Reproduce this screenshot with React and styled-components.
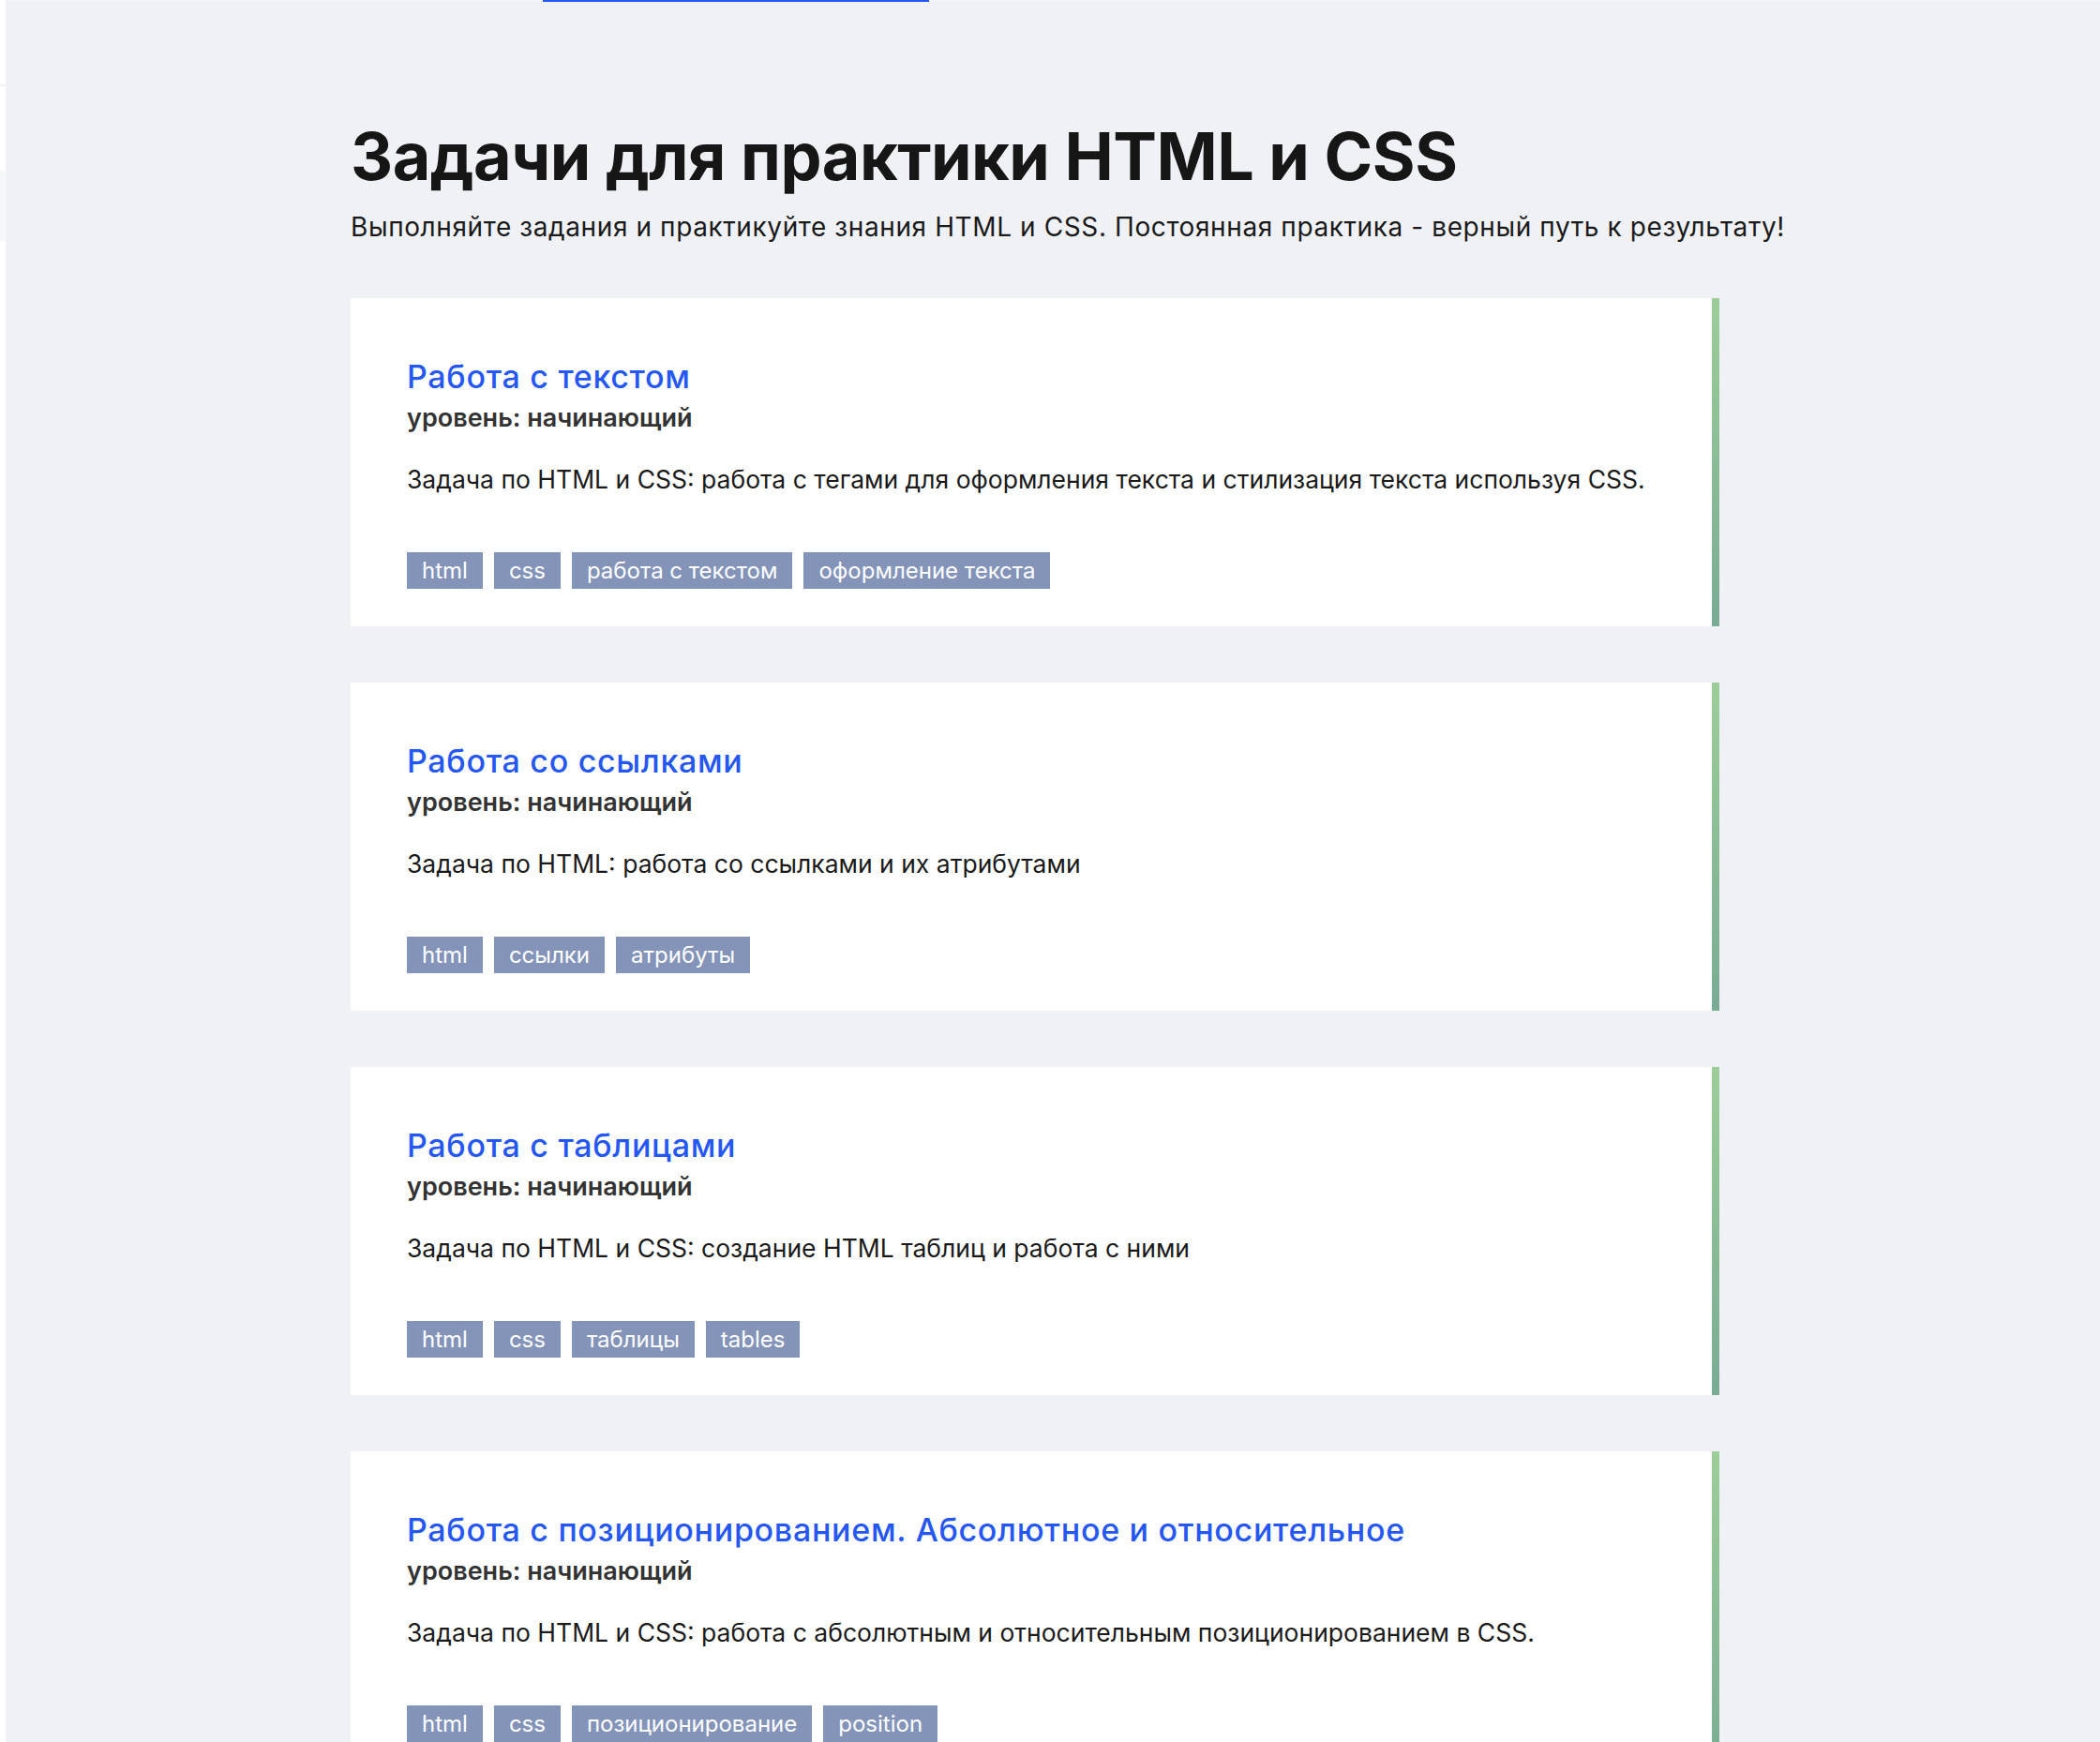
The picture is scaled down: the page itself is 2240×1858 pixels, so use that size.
import React from "react";
import styled, { createGlobalStyle } from "styled-components";

const GlobalStyle = createGlobalStyle`
  html, body {
    margin: 0;
    padding: 0;
    background: #eff1f5;
  }
  body {
    font-family: Inter, "Noto Sans", sans-serif;
    color: #161616;
  }
`;

const tasks = [
  {
    title: "Работа с текстом",
    level: "начинающий",
    text: "Задача по HTML и CSS: работа с тегами для оформления текста и стилизация текста используя CSS.",
    tags: ["html", "css", "работа с текстом", "оформление текста"],
  },
  {
    title: "Работа со ссылками",
    level: "начинающий",
    text: "Задача по HTML: работа со ссылками и их атрибутами",
    tags: ["html", "ссылки", "атрибуты"],
  },
  {
    title: "Работа с таблицами",
    level: "начинающий",
    text: "Задача по HTML и CSS: создание HTML таблиц и работа с ними",
    tags: ["html", "css", "таблицы", "tables"],
  },
  {
    title: "Работа с позиционированием. Абсолютное и относительное",
    level: "начинающий",
    text: "Задача по HTML и CSS: работа с абсолютным и относительным позиционированием в CSS.",
    tags: ["html", "css", "позиционирование", "position"],
  },
];

function App() {
  return (
    <>
      <GlobalStyle />
      <Page>
        <SideStrip>
          <StripLine />
          <StripBlock />
        </SideStrip>
        <Main>
          <TopBar>
            <Progress />
          </TopBar>
          <Content>
            <Heading>Задачи для практики HTML и CSS</Heading>
            <Lead>
              Выполняйте задания и практикуйте знания HTML и CSS. Постоянная практика - верный путь к результату!
            </Lead>
            <TaskList>
              {tasks.map((task) => (
                <TaskCard key={task.title}>
                  <TaskTitle href="#">{task.title}</TaskTitle>
                  <Level>уровень: {task.level}</Level>
                  <Description>{task.text}</Description>
                  <Tags>
                    {task.tags.map((tag) => (
                      <Tag key={tag}>{tag}</Tag>
                    ))}
                  </Tags>
                </TaskCard>
              ))}
            </TaskList>
          </Content>
        </Main>
      </Page>
    </>
  );
}

const Page = styled.div`
  display: flex;
  min-height: 100vh;
`;

const SideStrip = styled.div`
  width: 6px;
  flex-shrink: 0;
  background: #ffffff;
  padding-top: 90px;
`;

const StripLine = styled.div`
  height: 2px;
  background: #eff1f5;
`;

const StripBlock = styled.div`
  margin-top: 90px;
  height: 75px;
  background: #f6f7f9;
`;

const Main = styled.div`
  flex: 1;
  display: flex;
  flex-direction: column;
`;

const TopBar = styled.div`
  height: 1px;
  background: #f7f8fa;
`;

const Progress = styled.div`
  margin-left: 573px;
  width: 412px;
  height: 2px;
  background: #2457f5;
`;

const Content = styled.div`
  padding: 123px 0 0 368px;
`;

const Heading = styled.h1`
  margin: 0;
  font-size: 70px;
  line-height: 86px;
  font-weight: 700;
  color: #161616;
  letter-spacing: -0.5px;
`;

const Lead = styled.p`
  margin: 13px 0 0;
  font-size: 28px;
  line-height: 39px;
  letter-spacing: 0.6px;
  color: #1a1a1a;
  white-space: nowrap;
`;

const TaskList = styled.div`
  margin-top: 56px;
  width: 1460px;
  display: flex;
  flex-direction: column;
  gap: 60px;
`;

const TaskCard = styled.div`
  background: #ffffff;
  border-right: 8px solid #8cbe97;
  border-image: linear-gradient(to bottom, #9dcd98, #79ab95) 1;
  padding: 64px 60px 40px 60px;
  display: flex;
  flex-direction: column;
  align-items: flex-start;
`;

const TaskTitle = styled.a`
  font-size: 34px;
  line-height: 40px;
  font-weight: 500;
  letter-spacing: 0.7px;
  color: #2457f5;
  text-decoration: none;
`;

const Level = styled.div`
  margin-top: 4px;
  font-size: 27px;
  line-height: 39px;
  font-weight: 600;
  color: #333333;
`;

const Description = styled.p`
  margin: 25px 0 0;
  font-size: 26.5px;
  line-height: 42px;
  color: #1a1a1a;
`;

const Tags = styled.div`
  margin-top: 57px;
  display: flex;
  flex-wrap: wrap;
  gap: 12px;
`;

const Tag = styled.span`
  background: #8494b9;
  color: #ffffff;
  font-size: 24px;
  line-height: 39px;
  padding: 0 16px;
`;

export default App;
